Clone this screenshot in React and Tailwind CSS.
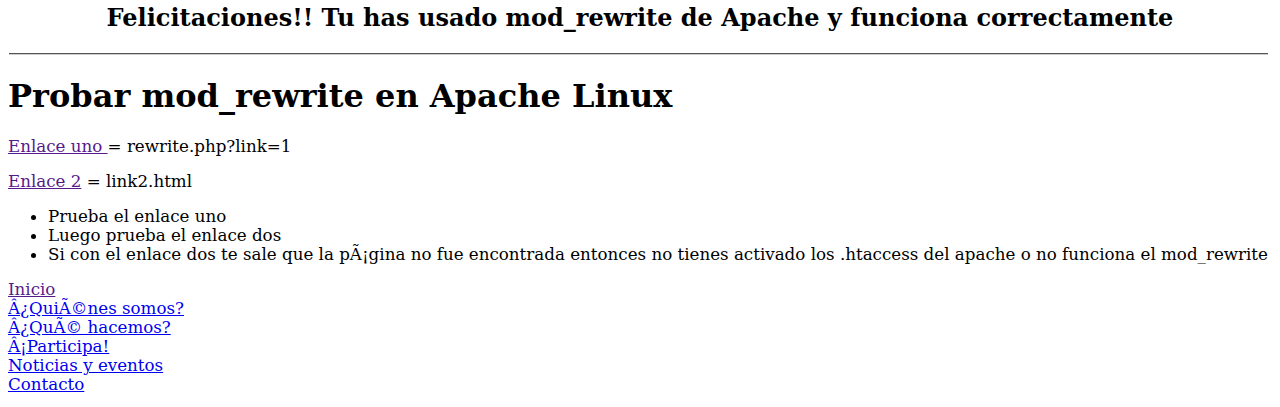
export default function App() {
  const links = [
    { label: 'Inicio', visited: true },
    { label: 'Â¿QuiÃ©nes somos?' },
    { label: 'Â¿QuÃ© hacemos?' },
    { label: 'Â¡Participa!' },
    { label: 'Noticias y eventos' },
    { label: 'Contacto' },
  ];

  return (
    <div className="bg-white text-black min-h-[407px] px-[8px] text-[16.7px] leading-[19px] font-['DejaVu_Serif',serif]">
      <h2 className="text-center text-[24px] font-bold leading-[28px] pt-[4px]">
        Felicitaciones!! Tu has usado mod_rewrite de Apache y funciona correctamente
      </h2>
      <hr className="mt-[21px] ml-[1px] mr-[4px] border-0 border-t border-b border-t-[#555] border-b-[#ccc]" />
      <h1 className="text-[32px] font-bold leading-[37px] mt-[23px]">Probar mod_rewrite en Apache Linux</h1>
      <p className="mt-[22px]">
        <a href="#" className="underline text-[#551a8b]">Enlace uno </a>= rewrite.php?link=1
      </p>
      <p className="mt-[16px]">
        <a href="#" className="underline text-[#551a8b]">Enlace 2</a> = link2.html
      </p>
      <ul className="mt-[16px] pl-[40px] list-disc">
        <li>Prueba el enlace uno</li>
        <li>Luego prueba el enlace dos</li>
        <li>Si con el enlace dos te sale que la pÃ¡gina no fue encontrada entonces no tienes activado los .htaccess del apache o no funciona el mod_rewrite</li>
      </ul>
      <div className="mt-[16px] flex flex-col items-start">
        {links.map((l) => (
          <a key={l.label} href="#" className={`underline ${l.visited ? 'text-[#551a8b]' : 'text-[#0000ee]'}`}>
            {l.label}
          </a>
        ))}
      </div>
    </div>
  );
}
